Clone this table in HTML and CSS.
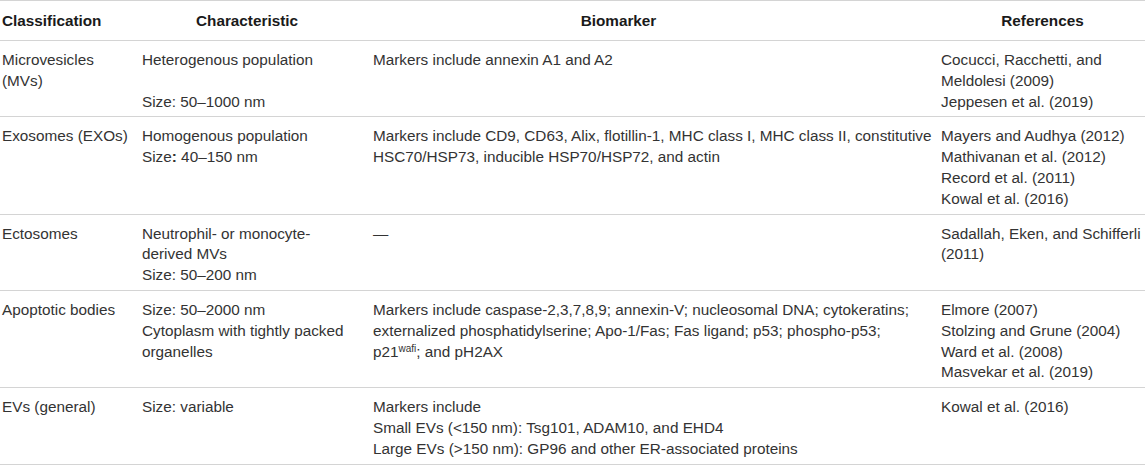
FILE: index.html
```html
<!DOCTYPE html>
<html lang="en">
<head>
<meta charset="utf-8">
<title>Extracellular vesicle classification</title>
<link rel="stylesheet" href="styles.css">
</head>
<body>
<table class="ev-table">
  <colgroup>
    <col class="c-class">
    <col class="c-char">
    <col class="c-bio">
    <col class="c-ref">
  </colgroup>
  <thead>
    <tr>
      <th class="h-class">Classification</th>
      <th class="h-char">Characteristic</th>
      <th class="h-bio">Biomarker</th>
      <th class="h-ref">References</th>
    </tr>
  </thead>
  <tbody>
    <tr>
      <td>Microvesicles<br>(MVs)</td>
      <td>Heterogenous population<br><br>Size: 50–1000 nm</td>
      <td>Markers include annexin A1 and A2</td>
      <td>Cocucci, Racchetti, and<br>Meldolesi (2009)<br>Jeppesen et al. (2019)</td>
    </tr>
    <tr>
      <td>Exosomes (EXOs)</td>
      <td>Homogenous population<br>Size<b>:</b> 40–150 nm</td>
      <td>Markers include CD9, CD63, Alix, flotillin-1, MHC class I, MHC class II, constitutive<br>HSC70/HSP73, inducible HSP70/HSP72, and actin</td>
      <td>Mayers and Audhya (2012)<br>Mathivanan et al. (2012)<br>Record et al. (2011)<br>Kowal et al. (2016)</td>
    </tr>
    <tr>
      <td>Ectosomes</td>
      <td>Neutrophil- or monocyte-<br>derived MVs<br>Size: 50–200 nm</td>
      <td>—</td>
      <td>Sadallah, Eken, and Schifferli<br>(2011)</td>
    </tr>
    <tr>
      <td>Apoptotic bodies</td>
      <td>Size: 50–2000 nm<br>Cytoplasm with tightly packed<br>organelles</td>
      <td>Markers include caspase-2,3,7,8,9; annexin-V; nucleosomal DNA; cytokeratins;<br>externalized phosphatidylserine; Apo-1/Fas; Fas ligand; p53; phospho-p53;<br>p21<sup class="sup">wafi</sup>; and pH2AX</td>
      <td>Elmore (2007)<br>Stolzing and Grune (2004)<br>Ward et al. (2008)<br>Masvekar et al. (2019)</td>
    </tr>
    <tr>
      <td>EVs (general)</td>
      <td>Size: variable</td>
      <td>Markers include<br>Small EVs (&lt;150 nm): Tsg101, ADAM10, and EHD4<br>Large EVs (&gt;150 nm): GP96 and other ER-associated proteins</td>
      <td>Kowal et al. (2016)</td>
    </tr>
  </tbody>
</table>
</body>
</html>
```

FILE: styles.css
```css
html, body {
  margin: 0;
  padding: 0;
  background: #ffffff;
}

.ev-table {
  width: 1145px;
  border-collapse: collapse;
  table-layout: fixed;
  font-family: "Liberation Sans", Arial, Helvetica, sans-serif;
  color: #333333;
  border-top: 1px solid #d4d4d4;
}

.c-class { width: 140px; }
.c-char { width: 231px; }
.c-bio { width: 568px; }
.c-ref { width: 206px; }

.ev-table th {
  font-size: 15.3px;
  font-weight: bold;
  color: #1a1a1a;
  line-height: 22px;
  padding: 9px 0 8px 2px;
  text-align: center;
  border-bottom: 1px solid #d4d4d4;
  white-space: nowrap;
}

.ev-table th.h-class { text-align: left; }
.ev-table th.h-char { padding-right: 19px; }
.ev-table th.h-bio { padding-right: 75px; }
.ev-table th.h-ref { padding-right: 1px; }

.ev-table td {
  font-size: 15.3px;
  line-height: 20.8px;
  padding: 9px 0 4px 2px;
  vertical-align: top;
  text-align: left;
  border-bottom: 1px solid #d4d4d4;
  white-space: nowrap;
}

.ev-table td b {
  font-weight: bold;
}

.sup {
  font-size: 10px;
  line-height: 0;
  vertical-align: 5px;
}
```
